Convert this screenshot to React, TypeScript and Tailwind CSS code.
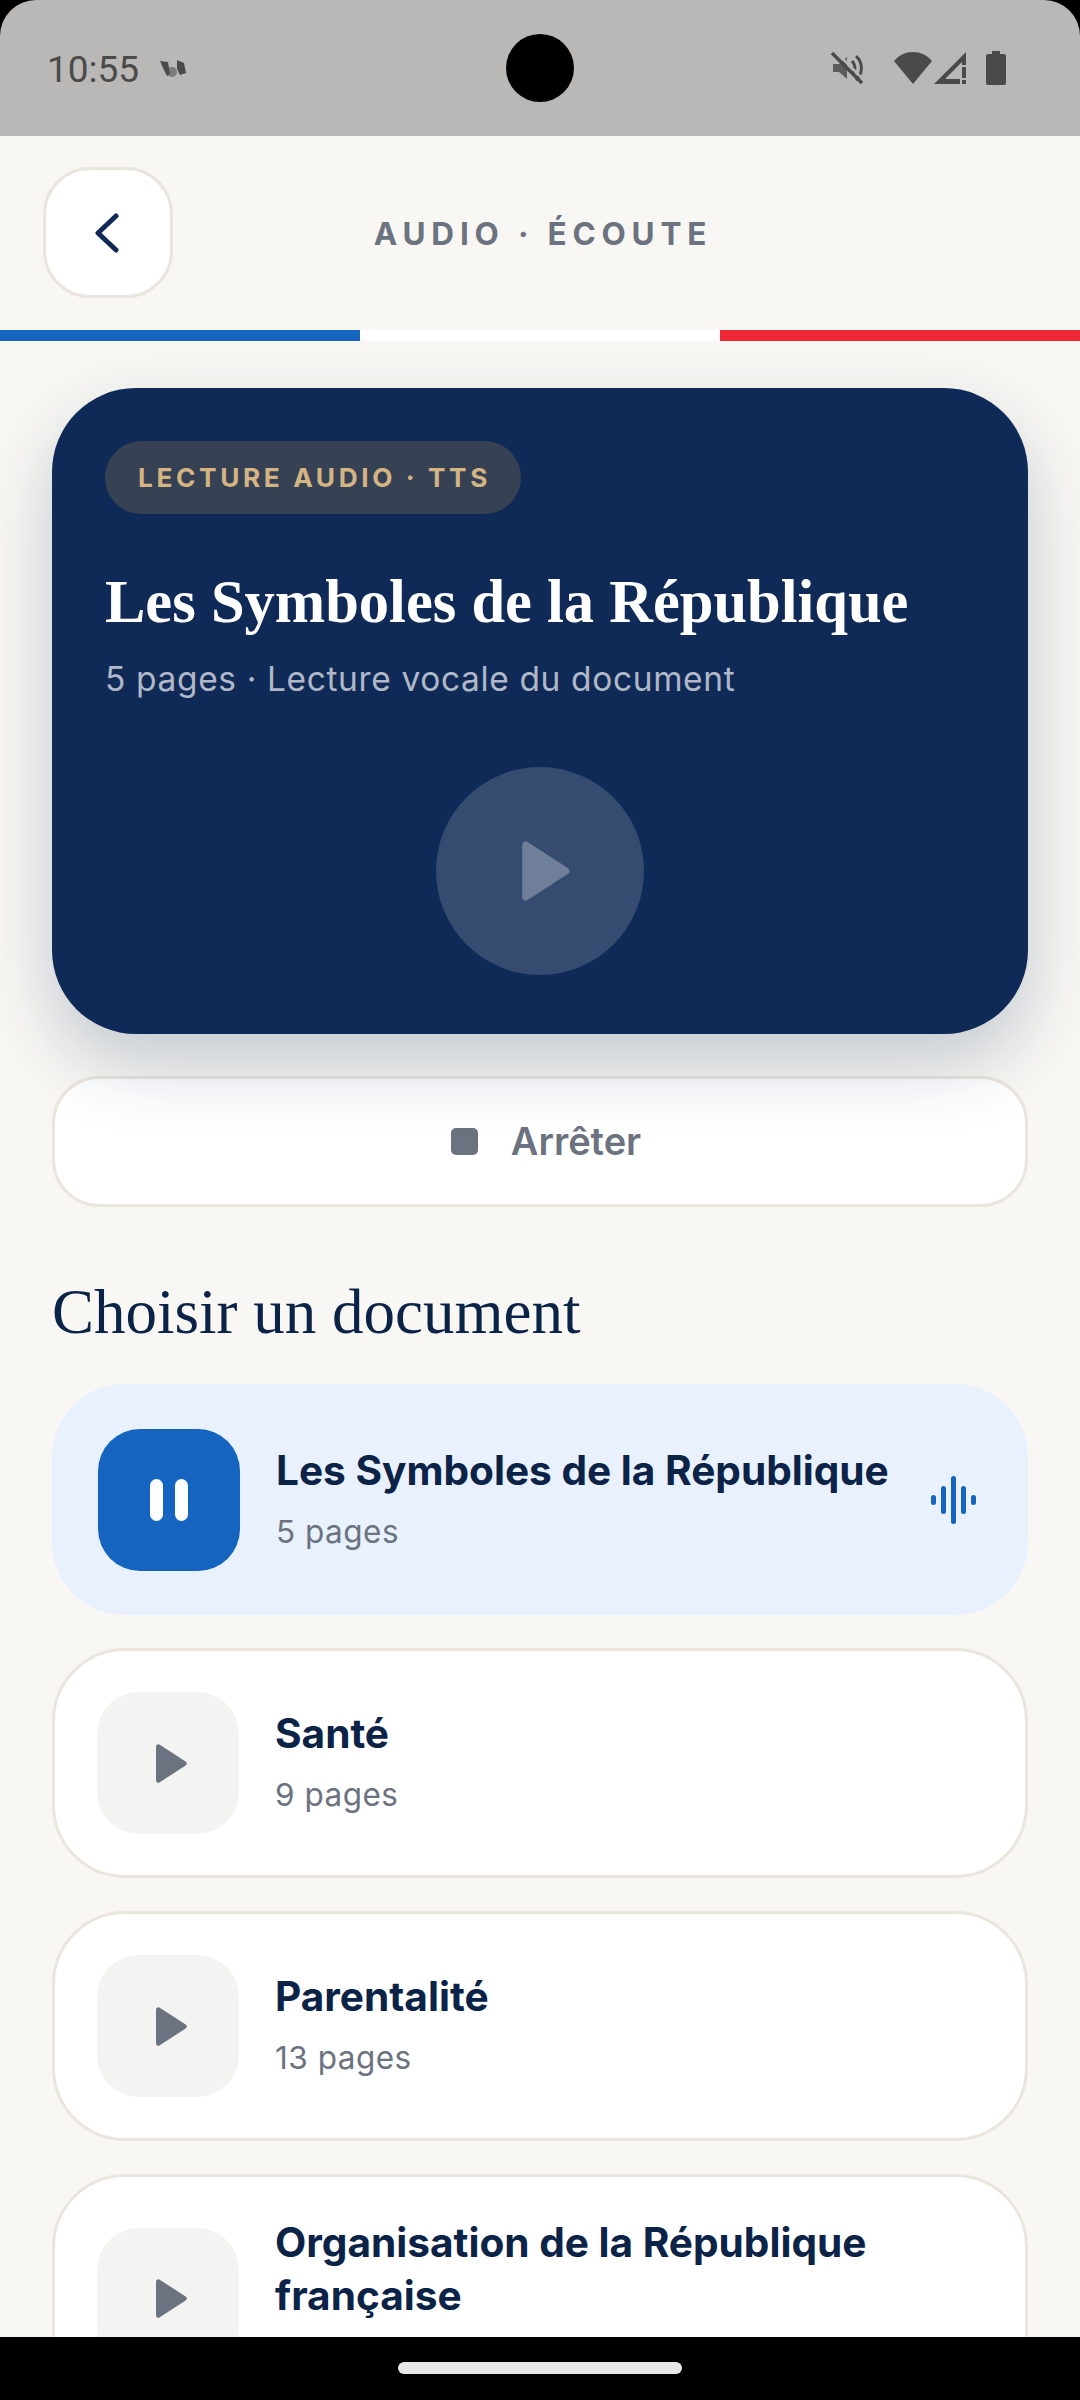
import React from "react";

const inter = { fontFamily: "Inter, sans-serif" };

function PlayIcon({ className }: { className: string }) {
  return (
    <svg viewBox="0 0 46 58" className={className} fill="currentColor">
      <path d="M0 4C0 .6 3.2-1 5.6 1.2L44 26c2.4 1.7 2.4 4.3 0 6L5.6 56.800C3.200 59 0 57.400 0 54Z" />
    </svg>
  );
}

function WaveIcon() {
  return (
    <svg viewBox="0 0 46 48" className="w-[46px] h-[48px] text-[#1565c0] shrink-0" fill="currentColor">
      <rect x="0" y="19" width="5" height="10" rx="2.5" />
      <rect x="10" y="10" width="5" height="28" rx="2.500" />
      <rect x="20" y="0" width="5" height="48" rx="2.500" />
      <rect x="30" y="10" width="5" height="28" rx="2.500" />
      <rect x="40" y="19" width="5" height="10" rx="2.500" />
    </svg>
  );
}

function StatusBar() {
  return (
    <div className="h-[136px] shrink-0 bg-[#b9b8b6] rounded-t-[36px] flex items-center justify-between pl-[47px] pr-[74px] relative">
      <div className="flex items-center gap-[20px] text-[#4b4a48] mt-[2px]">
        <span className="text-[37px] leading-none" style={{ fontFamily: "Roboto, sans-serif" }}>10:55</span>
        <svg viewBox="0 0 28 20" className="w-[28px] h-[20px]" fill="currentColor">
          <path d="M1 2l8 1 2 12-3 2-3-6zM18 1l7 3 2 10-6 2-3-6z" />
          <circle cx="13" cy="13" r="5" opacity=".55" />
        </svg>
      </div>
      <div className="absolute left-[506px] top-[34px] w-[68px] h-[68px] rounded-full bg-black" />
      <div className="flex items-center text-[#4b4a48] mb-[1px]">
        <svg viewBox="0 0 34 34" className="w-[34px] h-[34px] mr-[30px]" fill="none" stroke="currentColor">
          <path d="M3 13h6l8-7v22l-8-7H3z" fill="currentColor" stroke="none" opacity=".85" />
          <path d="M22 10a10 10 0 0 1 0 14M26 5a16 16 0 0 1 0 24" strokeWidth="3" />
          <path d="M2 2l30 30" strokeWidth="3.500" />
          <path d="M6 2l30 30" strokeWidth="2.500" stroke="#b9b8b6" transform="translate(-1 -2)" />
        </svg>
        <svg viewBox="0 0 38 32" className="w-[38px] h-[32px] mr-[2px]" fill="currentColor">
          <path d="M0 9C5 3 12 0 19 0s14 3 19 9L19 32Z" />
        </svg>
        <svg viewBox="0 0 32 32" className="w-[32px] h-[32px] mr-[20px]" fill="currentColor">
          <path d="M0 32 32 0v13h-4v-3L12 26v1h14v5Z" />
          <rect x="28" y="15" width="4" height="11" />
          <rect x="28" y="28" width="4" height="4" />
        </svg>
        <svg viewBox="0 0 20 34" className="w-[20px] h-[34px]" fill="currentColor">
          <path d="M6 0h8v3h4a2 2 0 0 1 2 2v27a2 2 0 0 1-2 2H2a2 2 0 0 1-2-2V5a2 2 0 0 1 2-2h4Z" />
        </svg>
      </div>
    </div>
  );
}

function Header() {
  return (
    <>
      <div className="h-[194px] shrink-0 flex items-center relative">
        <button className="ml-[43px] w-[130px] h-[131px] mt-[-1px] bg-white border-[3px] border-[#ebe6dd] rounded-[47px] flex items-center justify-center">
          <svg viewBox="0 0 26 40" className="w-[26px] h-[40px] mr-[2px] text-[#0f2a56]" fill="none" stroke="currentColor" strokeWidth="5" strokeLinecap="round" strokeLinejoin="round">
            <path d="M22 3 4 20l18 17" />
          </svg>
        </button>
        <div className="absolute inset-x-0 top-[80px] pl-[6px] text-center text-[31.500px] leading-[36px] font-bold tracking-[5.800px] text-[#6b7280]">
          AUDIO · ÉCOUTE
        </div>
      </div>
      <div className="grid grid-cols-3 h-[11px] shrink-0">
        <div className="bg-[#1565c0]" />
        <div className="bg-white" />
        <div className="bg-[#ee2737]" />
      </div>
    </>
  );
}

function Hero() {
  return (
    <div className="relative z-10 h-[646px] bg-[#0f2a56] rounded-[84px] pt-[53px] px-[53px] shadow-[0_30px_70px_rgba(15,42,86,0.22)]">
      <div className="inline-flex items-center h-[73px] pl-[33px] pr-[30px] rounded-full bg-[#364254] text-[#d4b483] text-[26.250px] font-bold tracking-[3.600px]">
        LECTURE AUDIO · TTS
      </div>
      <h1 className="mt-[53px] text-[60.500px] leading-[70px] text-white font-bold" style={{ fontFamily: '"Liberation Serif", serif' }}>
        Les Symboles de la République
      </h1>
      <p className="mt-[20px] text-[33.500px] leading-[44px] tracking-[0.630px] text-[#b0b8c8]">
        5 pages · Lecture vocale du document
      </p>
      <div className="mt-[66px] flex justify-center">
        <div className="w-[208px] h-[208px] rounded-full bg-[#364b70] flex items-center justify-center">
          <PlayIcon className="w-[48px] h-[60px] text-[#6f7f99] ml-[12px]" />
        </div>
      </div>
    </div>
  );
}

function StopButton() {
  return (
    <button className="mt-[42px] w-full h-[131px] pl-[12px] bg-white border-[3px] border-[#ebe6dd] rounded-[47px] flex items-center justify-center gap-[33px] text-[#6b7280]">
      <span className="w-[27px] h-[27px] rounded-[5px] bg-[#6b7280]" />
      <span className="text-[38px] font-semibold">Arrêter</span>
    </button>
  );
}

function DocRow({ title, pages, active }: { title: string; pages?: string; active?: boolean }) {
  return (
    <div
      className={
        active
          ? "min-h-[231px] rounded-[73px] bg-[#e9f1fe] border-[3px] border-[#e9f1fe] flex items-center gap-[36px] pl-[43px] pr-[48px] py-[38px]"
          : "min-h-[230px] rounded-[73px] bg-white border-[3px] border-[#ebe6dd] flex items-center gap-[36px] pl-[42px] pr-[48px] py-[39px]"
      }
    >
      <div className={active ? "w-[142px] h-[142px] shrink-0 rounded-[42px] bg-[#1565c0] flex items-center justify-center gap-[12px]" : "w-[142px] h-[142px] shrink-0 rounded-[42px] bg-[#f3f3f1] flex items-center justify-center"}>
        {active ? (
          <>
            <span className="w-[13px] h-[42px] rounded-full bg-white" />
            <span className="w-[13px] h-[42px] rounded-full bg-white" />
          </>
        ) : (
          <PlayIcon className="w-[31px] h-[39px] text-[#6b7280] ml-[7px]" />
        )}
      </div>
      <div className="flex-1 min-w-0">
        <div className="text-[40.600px] leading-[53px] font-bold text-[#0c2348]">{title}</div>
        {/* the last row's page count sits below the nav bar in the screenshot */}
        {pages ? (
          <div className="mt-[11px] text-[31.500px] leading-[48px] tracking-[0.500px] text-[#6b7280]">{pages}</div>
        ) : (
          <div className="h-[59px]" />
        )}
      </div>
      {active && <WaveIcon />}
    </div>
  );
}

export default function App() {
  return (
    <div className="w-[1080px] h-[2400px] bg-black flex flex-col overflow-hidden" style={inter}>
      <StatusBar />
      <div className="flex-1 min-h-0 overflow-hidden bg-[#f8f7f3] flex flex-col">
        <Header />
        <div className="px-[52px] pt-[47px]">
          <Hero />
          <StopButton />
          <h2 className="mt-[70px] text-[63px] leading-[70px] text-[#0c2348]" style={{ fontFamily: '"Liberation Serif", serif' }}>
            Choisir un document
          </h2>
          <div className="mt-[37px] flex flex-col gap-[33px]">
            <DocRow active title="Les Symboles de la République" pages="5 pages" />
            <DocRow title="Santé" pages="9 pages" />
            <DocRow title="Parentalité" pages="13 pages" />
            <DocRow title="Organisation de la République française" />
          </div>
        </div>
      </div>
      <div className="h-[63px] shrink-0 bg-black flex justify-center pt-[25px]">
        <div className="w-[284px] h-[12px] rounded-full bg-[#e8e8e8]" />
      </div>
    </div>
  );
}
